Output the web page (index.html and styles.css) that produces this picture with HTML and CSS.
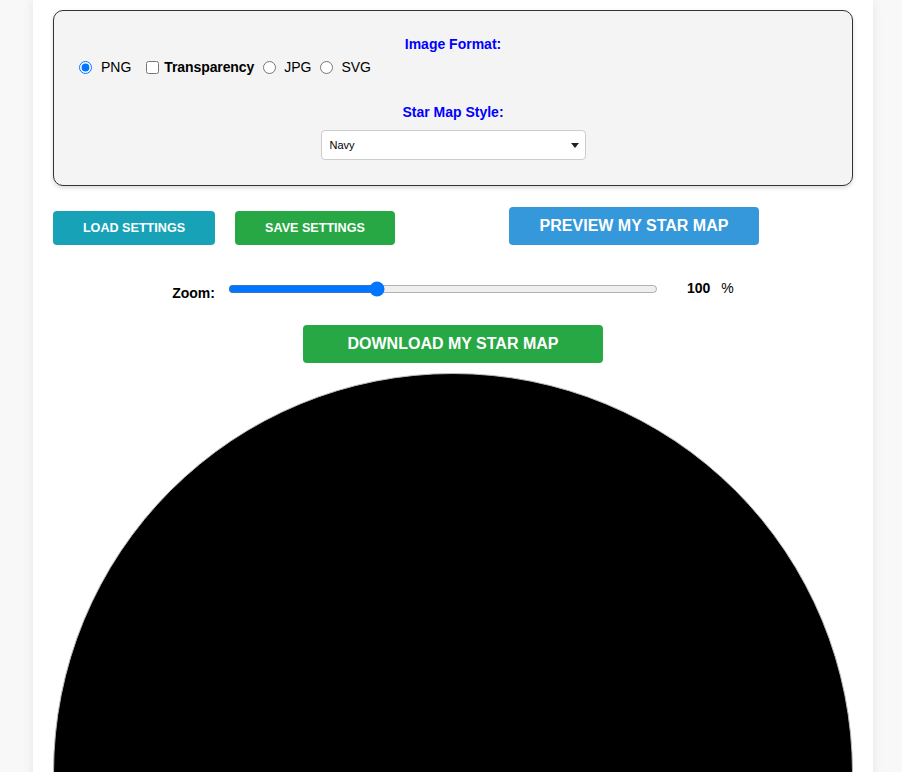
FILE: index.html
```html
<!DOCTYPE html>
<html lang="en">
<head>
<meta charset="utf-8">
<title>Star Map</title>
<link rel="stylesheet" href="styles.css">
</head>
<body>
<div class="container">
  <div class="panel">
    <label class="group-title">Image Format:</label>
    <div class="format-row">
      <input type="radio" name="fmt" id="png" class="radio r-png" checked>
      <label for="png" class="opt opt-png">PNG</label>
      <input type="checkbox" id="transp" class="check">
      <label for="transp" class="opt opt-transp">Transparency</label>
      <input type="radio" name="fmt" id="jpg" class="radio r-jpg">
      <label for="jpg" class="opt opt-jpg">JPG</label>
      <input type="radio" name="fmt" id="svg" class="radio r-svg">
      <label for="svg" class="opt">SVG</label>
    </div>
    <label class="group-title style-title" for="style">Star Map Style:</label>
    <div class="select-wrap">
      <select id="style" class="style-select">
        <option>Navy</option>
        <option>Black</option>
        <option>White</option>
      </select>
    </div>
  </div>

  <div class="btn-row">
    <button class="btn btn-load">LOAD SETTINGS</button>
    <button class="btn btn-save">SAVE SETTINGS</button>
    <button class="btn btn-big btn-preview">PREVIEW MY STAR MAP</button>
  </div>

  <div class="zoom-row">
    <label class="zoom-label" for="zoom">Zoom:</label>
    <input type="range" id="zoom" class="zoom-range" min="10" max="275" value="100">
    <span class="zoom-value">100</span>
    <span class="zoom-pct">%</span>
  </div>

  <div class="download-row">
    <button class="btn btn-big btn-download">DOWNLOAD MY STAR MAP</button>
  </div>

  <div class="map-wrap">
    <div class="map-circle"></div>
  </div>
</div>
</body>
</html>
```

FILE: styles.css
```css
html, body {
  margin: 0;
  padding: 0;
}
body {
  background: #f8f8f8;
  font-family: "Liberation Sans", Arial, sans-serif;
  padding-left: 4px;
  overflow: hidden;
}
.container {
  width: 800px;
  margin: 0 auto;
  background: #ffffff;
  padding: 10px 20px 40px;
  box-shadow: 0 0 10px rgba(0, 0, 0, 0.08);
  min-height: 1300px;
}
.panel {
  background: #f4f4f4;
  border: 1px solid #333333;
  border-radius: 10px;
  padding: 25px 20px 25px;
  box-shadow: 0 2px 4px rgba(0, 0, 0, 0.15);
}
.group-title {
  display: block;
  text-align: center;
  color: #0000ff;
  font-weight: bold;
  font-size: 14px;
  line-height: 16px;
}
.format-row {
  display: flex;
  align-items: center;
  height: 20px;
  margin-top: 5px;
  font-size: 14px;
  color: #000;
}
.radio, .check {
  width: 13px;
  height: 13px;
  margin: 0;
}
.r-png { margin-left: 5px; margin-right: 9px; }
.opt { line-height: 16px; }
.opt-png { margin-right: 15px; }
.check { margin-right: 5px; }
.opt-transp { font-weight: bold; margin-right: 9px; letter-spacing: -0.1px; }
.r-jpg { margin-right: 8px; }
.opt-jpg { margin-right: 9px; }
.r-svg { margin-right: 8px; }
.style-title {
  margin-top: 27px;
}
.select-wrap {
  position: relative;
  width: 265px;
  margin: 10px auto 0;
}
.select-wrap::after {
  content: "";
  position: absolute;
  right: 7px;
  top: 13px;
  border-left: 4px solid transparent;
  border-right: 4px solid transparent;
  border-top: 5px solid #222222;
  pointer-events: none;
}
.style-select {
  display: block;
  width: 265px;
  height: 30px;
  border: 1px solid #cccccc;
  border-radius: 4px;
  background: #ffffff;
  padding: 0 8px;
  font-family: "Liberation Sans", Arial, sans-serif;
  font-size: 11px;
  color: #000;
  appearance: none;
  -webkit-appearance: none;
}
.btn-row {
  display: flex;
  align-items: flex-end;
  margin-top: 21px;
}
.btn {
  border: none;
  border-radius: 4px;
  color: #ffffff;
  font-family: "Liberation Sans", Arial, sans-serif;
  font-weight: bold;
  font-size: 12.6px;
  padding: 0;
  cursor: pointer;
}
.btn-load {
  width: 162px;
  height: 34px;
  background: #17a2b8;
}
.btn-save {
  width: 160px;
  height: 34px;
  margin-left: 20px;
  background: #28a745;
}
.btn-big {
  font-size: 16px;
  height: 38px;
}
.btn-preview {
  width: 250px;
  margin-left: 114px;
  background: #3498db;
}
.zoom-row {
  display: flex;
  align-items: flex-start;
  justify-content: center;
  height: 24px;
  margin-top: 35px;
  font-size: 14px;
  color: #000;
}
.zoom-label {
  font-weight: bold;
  line-height: 16px;
  margin-top: 5px;
  margin-right: 13px;
}
.zoom-range {
  width: 430px;
  height: 16px;
  margin: 1px 29px 0 0;
  padding: 0;
}
.zoom-value {
  font-weight: bold;
  line-height: 16px;
  margin-right: 11px;
}
.zoom-pct {
  line-height: 16px;
}
.download-row {
  display: flex;
  justify-content: center;
  margin-top: 21px;
}
.btn-download {
  width: 300px;
  background: #28a745;
}
.map-wrap {
  margin-top: 10px;
}
.map-circle {
  width: 798px;
  height: 798px;
  border-radius: 50%;
  background: #000000;
  border: 1px solid #bbbbbb;
}
```
